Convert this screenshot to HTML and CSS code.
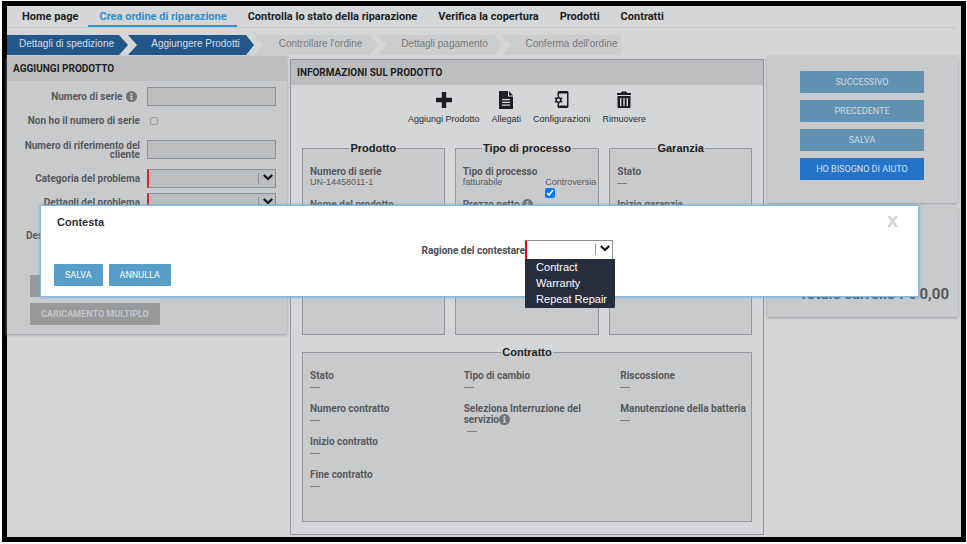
FILE: index.html
```html
<!DOCTYPE html>
<html lang="it">
<head>
<meta charset="utf-8">
<meta name="viewport" content="width=device-width, initial-scale=1">
<title>Crea ordine di riparazione</title>
<link rel="stylesheet" href="styles.css">
</head>
<body>
<svg class="defs" aria-hidden="true">
  <symbol id="info" viewBox="0 0 12 12"><circle cx="6" cy="6" r="6" fill="#707274"/><path d="M4.500 5h2.500v3.400h.8v1.200H4.400V8.400h.7V6.200h-.6zM5 2.300h2V4H5z" fill="#c9cacc"/></symbol>
  <symbol id="chevron" viewBox="0 0 10 8"><path d="M.8 1.500L5 5.500l4.200-4" fill="none" stroke="currentColor" stroke-width="2.200"/></symbol>
</svg>
<div class="frame">
  <nav class="nav">
    <a href="#">Home page</a>
    <a href="#" class="current" aria-current="page">Crea ordine di riparazione</a>
    <a href="#">Controlla lo stato della riparazione</a>
    <a href="#">Verifica la copertura</a>
    <a href="#">Prodotti</a>
    <a href="#">Contratti</a>
  </nav>
  <ol class="steps">
    <li class="step first done">Dettagli di spedizione</li>
    <li class="step done">Aggiungere Prodotti</li>
    <li class="step">Controllare l'ordine</li>
    <li class="step">Dettagli pagamento</li>
    <li class="step last">Conferma dell'ordine</li>
  </ol>
  <main class="columns">
    <section class="panel add">
      <h2 class="panel-title">AGGIUNGI PRODOTTO</h2>
      <form class="form">
        <div class="row"><label for="serial">Numero di serie <svg class="info"><use href="#info"/></svg></label><input type="text" id="serial" class="box"></div>
        <div class="row check"><label for="noserial">Non ho il numero di serie</label><input type="checkbox" id="noserial" class="tick"></div>
        <div class="row"><label for="ref">Numero di riferimento del cliente</label><input type="text" id="ref" class="box"></div>
        <div class="row select-row"><label for="cat">Categoria del problema</label><span class="select"><select id="cat" class="box"><option></option></select><svg class="chevron"><use href="#chevron"/></svg></span></div>
        <div class="row"><label for="det">Dettagli del problema</label><span class="select"><select id="det" class="box"><option></option></select><svg class="chevron"><use href="#chevron"/></svg></span></div>
        <div class="row tall"><label for="desc">Descrizione del problema</label><textarea id="desc" class="box"></textarea></div>
        <div class="form-buttons">
          <button type="button" class="btn grey wide" aria-label="Aggiungi prodotto"></button>
          <button type="button" class="btn grey narrow" aria-label="Annulla"></button>
          <button type="button" class="btn grey">CARICAMENTO MULTIPLO</button>
        </div>
      </form>
    </section>

    <section class="product">
      <h2 class="panel-title">INFORMAZIONI SUL PRODOTTO</h2>
      <div class="tools">
        <button type="button" class="tool"><svg viewBox="0 0 20 20"><path d="M7.800 2h4.400v5.800H18v4.400h-5.800V18H7.800v-5.800H2V7.800h5.800z"/></svg>Aggiungi Prodotto</button>
        <button type="button" class="tool"><svg viewBox="0 0 20 20"><path fill-rule="evenodd" d="M3 1h9v5.500h5V19H3zM6 9v1.300h8V9zm0 2.700V13h8v-1.300zm0 2.700v1.300h8v-1.300zM13 1l4 4.500h-4z"/></svg>Allegati</button>
        <button type="button" class="tool"><svg viewBox="0 0 20 20"><path fill-rule="evenodd" d="M5.500 6V2.500C5.500 1.700 6.200 1 7 1h8c.8 0 1.500.7 1.500 1.500v14c0 .8-.7 1.500-1.500 1.500H7c-.8 0-1.500-.7-1.500-1.500V14H7v1.500h8v-12H7V6z"/><circle cx="6.500" cy="10" r="2.300" fill="none" stroke="#1d1f22" stroke-width="1.500"/><path d="M6.500 5.900v1.700M6.500 12.400v1.700M2.900 7.900l1.500.9M8.600 11.200l1.500.9M2.900 12.100l1.500-.9M8.600 8.800l1.500-.9" stroke="#1d1f22" stroke-width="1.500"/></svg>Configurazioni</button>
        <button type="button" class="tool"><svg viewBox="0 0 20 20"><path fill-rule="evenodd" d="M3 3h4l1-1.500h4L13 3h4v2H3zM3.500 6h13v12h-13zM6 8v8h1.400V8zm3.300 0v8h1.400V8zm3.300 0v8H14V8z"/></svg>Rimuovere</button>
      </div>
      <div class="groups">
        <fieldset class="group">
          <legend>Prodotto</legend>
          <dl><dt>Numero di serie</dt><dd>UN-14458011-1</dd></dl>
          <dl><dt>Nome del prodotto</dt><dd class="dash"></dd></dl>
        </fieldset>
        <fieldset class="group">
          <legend>Tipo di processo</legend>
          <div class="pair">
            <dl><dt>Tipo di processo</dt><dd>fatturabile</dd></dl>
            <label class="dispute">Controversia<input type="checkbox" class="tick" checked></label>
          </div>
          <dl><dt>Prezzo netto <svg class="info"><use href="#info"/></svg></dt><dd class="dash"></dd></dl>
        </fieldset>
        <fieldset class="group">
          <legend>Garanzia</legend>
          <dl><dt>Stato</dt><dd class="dash"></dd></dl>
          <dl><dt>Inizio garanzia</dt><dd class="dash"></dd></dl>
        </fieldset>
      </div>
      <fieldset class="group contract">
        <legend>Contratto</legend>
        <div class="contract-grid">
          <div>
            <dl><dt>Stato</dt><dd class="dash"></dd></dl>
            <dl><dt>Numero contratto</dt><dd class="dash"></dd></dl>
            <dl><dt>Inizio contratto</dt><dd class="dash"></dd></dl>
            <dl><dt>Fine contratto</dt><dd class="dash"></dd></dl>
          </div>
          <div>
            <dl><dt>Tipo di cambio</dt><dd class="dash"></dd></dl>
            <dl><dt>Seleziona Interruzione del servizio<svg class="info"><use href="#info"/></svg></dt><dd class="dash indent"></dd></dl>
          </div>
          <div>
            <dl><dt>Riscossione</dt><dd class="dash"></dd></dl>
            <dl><dt>Manutenzione della batteria</dt><dd class="dash"></dd></dl>
          </div>
        </div>
      </fieldset>
    </section>

    <aside class="side">
      <div class="panel actions">
        <button type="button" class="btn muted">SUCCESSIVO</button>
        <button type="button" class="btn muted">PRECEDENTE</button>
        <button type="button" class="btn muted">SALVA</button>
        <button type="button" class="btn help">HO BISOGNO DI AIUTO</button>
      </div>
      <div class="panel total">Totale carrello : € 0,00</div>
    </aside>
  </main>

  <div class="modal" role="dialog" aria-labelledby="modal-title">
    <div class="modal-head"><h2 id="modal-title">Contesta</h2><button type="button" class="close">x</button></div>
    <div class="modal-row">
      <label for="reason">Ragione del contestare</label>
      <span class="select reason">
        <select id="reason" class="box"><option></option></select><svg class="chevron"><use href="#chevron"/></svg>
        <ul class="menu"><li>Contract</li><li>Warranty</li><li>Repeat Repair</li></ul>
      </span>
    </div>
    <div class="modal-buttons"><button type="button" class="btn blue">SALVA</button><button type="button" class="btn blue">ANNULLA</button></div>
  </div>
</div>
</body>
</html>
```
FILE: styles.css
```css
* { box-sizing: border-box; }
body {
  margin: 0;
  padding: 1px 1px 2px 2px;
  background: #fff;
  font: 10px/11px Roboto, "Liberation Sans", sans-serif;
  color: #1d1f22;
}
button, input, select, textarea { font: inherit; margin: 0; }
h2, ol, ul, dl, dd { margin: 0; padding: 0; }
ol, ul { list-style: none; }
.defs { position: absolute; width: 0; height: 0; }
.frame {
  position: relative;
  min-height: calc(100vh - 3px);
  border: 5px solid #000;
  background: #d4d6d8;
}

.nav {
  display: flex;
  height: 22px;
  margin-right: 6px;
  padding-left: 4px;
  border-bottom: 1px solid #c4c6c8;
}
.nav a {
  height: 21px;
  padding: 0 10px 0 11px;
  font-weight: 700;
  font-size: 11px;
  line-height: 21px;
  color: #1d1f22;
  text-decoration: none;
}
.nav .current { color: #2b91d4; border-bottom: 2px solid #2b91d4; }

.steps { display: flex; margin-top: 7px; }
.step {
  width: 124px;
  height: 20px;
  padding-left: 9px;
  font-family: "Liberation Sans", Arial, sans-serif;
  line-height: 17px;
  text-align: center;
  color: #77797b;
  background: #cbcdcf;
  clip-path: polygon(0 0, calc(100% - 8px) 0, 100% 50%, calc(100% - 8px) 100%, 0 100%, 9px 50%);
}
.done { width: 126px; background: #23578a; color: #d8dee4; }
.first { width: 121px; padding-left: 0; padding-right: 2px; clip-path: polygon(0 0, calc(100% - 9px) 0, 100% 50%, calc(100% - 9px) 100%, 0 100%); }
.last { width: 119px; padding-left: 20px; clip-path: polygon(0 0, 100% 0, 100% 100%, 0 100%, 9px 50%); }

.columns {
  display: grid;
  grid-template-columns: 280fr 474fr 191fr;
  column-gap: 3px;
  align-items: start;
  margin-right: 3px;
  padding-top: 1px;
}
.panel { background: #c9cacc; box-shadow: 0 1px 3px #999b9e; }
.panel-title {
  height: 25px;
  padding-left: 6px;
  background: #bcbdbf;
  font-size: 10px;
  line-height: 25px;
  font-weight: 700;
}
.add { min-height: 278px; }
.form { padding: 6px 11px 9px 0; font-weight: 700; color: #57595c; }
.row {
  display: grid;
  grid-template-columns: 133px 1fr;
  column-gap: 7px;
  align-items: center;
  min-height: 19px;
  margin-bottom: 5px;
}
.row label { text-align: right; line-height: 9px; padding-left: 12px; }
.row.check { margin-bottom: 10px; }
.row .info { margin: 0 3px 0 1px; }
.select-row { margin-top: 10px; }
.tall { height: 36px; margin: 5px 0 22px; }
.box {
  display: block;
  width: 100%;
  height: 19px;
  padding: 0 4px;
  border: 1px solid #8f9198;
  border-radius: 0;
  background: #bcbdbf;
  appearance: none;
  resize: none;
}
.tall .box { height: 36px; }
.select { position: relative; display: block; }
.select .box { border-left: 2px solid #d8232a; }
.chevron {
  position: absolute;
  top: 4px;
  right: 1px;
  width: 17px;
  height: 11px;
  padding: 0 2px 2px 4px;
  border-left: 1px solid #8f9198;
  color: #111;
  pointer-events: none;
}
.tick { width: 10px; height: 10px; }
.row .tick { appearance: none; width: 8px; height: 8px; margin-left: 3px; border: 1px solid #9c9ea1; border-radius: 2px; }
.info { width: 11px; height: 11px; vertical-align: -2px; }

.form-buttons { display: flex; flex-wrap: wrap; gap: 6px; padding-left: 23px; }
.btn {
  height: 22px;
  padding: 0 11px;
  border: 0;
  border-radius: 1px;
  color: #fff;
  font-size: 9px;
  line-height: 22px;
  text-align: center;
}
.grey { background: #98999b; color: #c5c6c8; }
.wide { width: 153px; }
.narrow { width: 64px; }
.muted { background: #6093b1; color: #d0dae0; }
.help { background: #2374c9; color: #d5e1ee; }
.blue { background: #569dc8; }

.product { margin-top: 3px; border: 1px solid #94969c; padding-bottom: 12px; }
.tools { display: flex; justify-content: center; gap: 12px; height: 57px; padding-top: 5px; }
.tool {
  display: flex;
  flex-direction: column;
  align-items: center;
  gap: 4px;
  height: 36px;
  padding: 0;
  border: 0;
  background: none;
  font: 9px/11px "Liberation Sans", Arial, sans-serif;
  color: #2b2d30;
}
.tool svg { width: 20px; height: 20px; fill: #1d1f22; }

.groups { display: grid; grid-template-columns: 143fr 145fr 143fr; gap: 10px; padding: 0 11px; }
.group {
  min-width: 0;
  height: 193px;
  margin: 0;
  padding: 11px 2px 0;
  border: 1px solid #94969c;
  background: #c9cacc;
  color: #57595c;
}
legend {
  margin: 0 auto;
  padding: 0 1px;
  font: 700 11px/13px "Liberation Sans", Arial, sans-serif;
  color: #1d1f22;
}
dl { min-height: 33px; padding-left: 5px; }
dt { font-weight: 700; }
dd, .dispute { font: 9px/11px "Liberation Sans", Arial, sans-serif; }
.dash::before { content: ""; display: block; width: 10px; height: 6px; border-bottom: 1px solid #7c7e81; }
.indent { padding-left: 3px; }
.pair { display: flex; justify-content: space-between; }
.dispute { display: flex; flex-direction: column; align-items: flex-start; padding-top: 11px; height: 33px; }
.contract { height: 176px; margin: 11px 11px 0; }
.contract-grid { display: grid; grid-template-columns: 154fr 157fr 134fr; }
.contract-grid dt { max-width: 130px; }

.side { display: grid; gap: 4px; }
.actions { display: grid; gap: 7px; padding: 15px 34px 23px 33px; }
.actions .btn { padding: 0; }
.total {
  display: flex;
  justify-content: flex-end;
  height: 110px;
  padding: 78px 9px 0 0;
  font-size: 15px;
  line-height: 18px;
  font-weight: 700;
  color: #57595c;
  white-space: nowrap;
}

.modal {
  position: absolute;
  top: 199px;
  left: 33px;
  right: 42px;
  padding: 9px 0 10px;
  border: 1px solid #8db8d8;
  background: #fff;
  box-shadow: 0 0 3px #6aa5cf;
}
.modal-head { display: flex; justify-content: space-between; height: 25px; padding: 0 20px 0 16px; }
.modal-head h2 { font: 700 11px/14px "Liberation Sans", Arial, sans-serif; color: #2b3040; }
.close { height: 10px; padding: 0; border: 0; background: none; font: 700 20px/10px "Liberation Sans", Arial, sans-serif; color: #d3d3d3; }
.modal-row { display: grid; grid-template-columns: 55.2% 88px; align-items: center; }
.modal-row label { text-align: right; font-weight: 700; color: #4a4c50; }
.reason .box { height: 20px; background: #fff; border-left-color: #f00; }
.menu {
  position: absolute;
  top: 19px;
  left: 0;
  width: 90px;
  padding-bottom: 1px;
  background: #272d3d;
  border-radius: 0 0 1px 1px;
  font: 11px/16px "Liberation Sans", Arial, sans-serif;
  color: #fff;
  white-space: nowrap;
}
.menu li { padding-left: 11px; }
.modal-buttons { display: flex; gap: 6px; margin-top: 4px; padding-left: 13px; }
```
